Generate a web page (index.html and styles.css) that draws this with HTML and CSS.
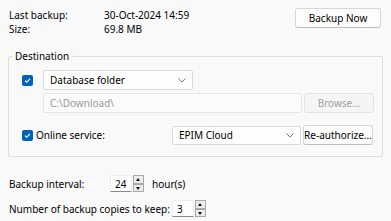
FILE: index.html
```html
<!DOCTYPE html>
<html lang="en">
<head>
  <meta charset="UTF-8">
  <title>Backup</title>
  <link rel="stylesheet" href="styles.css">
</head>
<body>
  <div class="dialog">
    <div class="summary">
      <dl class="info">
        <dt>Last backup:</dt><dd>30-Oct-2024 14:59</dd>
        <dt>Size:</dt><dd>69.8 MB</dd>
      </dl>
      <button class="btn btn-main">Backup Now</button>
    </div>

    <fieldset class="group">
      <legend>Destination</legend>
      <div class="row">
        <span class="check"><svg viewBox="0 0 11 11"><path d="M3 5.6 L4.7 7.2 L8 3.8" /></svg></span>
        <div class="combo combo-folder">
          <span>Database folder</span>
          <svg class="chevron" viewBox="0 0 8 5"><path d="M0.5 0.5 L4 4 L7.5 0.5" /></svg>
        </div>
      </div>
      <div class="row row-path">
        <div class="textbox disabled">C:\Download\</div>
        <button class="btn btn-side disabled">Browse...</button>
      </div>
      <div class="row row-online">
        <label class="check-label">
          <span class="check"><svg viewBox="0 0 11 11"><path d="M3 5.6 L4.7 7.2 L8 3.8" /></svg></span>
          Online service:
        </label>
        <div class="combo combo-service">
          <span>EPIM Cloud</span>
          <svg class="chevron" viewBox="0 0 8 5"><path d="M0.5 0.5 L4 4 L7.5 0.5" /></svg>
        </div>
        <button class="btn btn-side">Re-authorize...</button>
      </div>
    </fieldset>

    <div class="setting">
      <span class="setting-label label-interval">Backup interval:</span>
      <div class="spin">
        <span class="spin-value">24</span>
        <div class="spin-buttons">
          <span class="spin-up"></span>
          <span class="spin-down"></span>
        </div>
      </div>
      <span class="unit">hour(s)</span>
    </div>
    <div class="setting setting-copies">
      <span class="setting-label label-copies">Number of backup copies to keep:</span>
      <div class="spin">
        <span class="spin-value">3</span>
        <div class="spin-buttons">
          <span class="spin-up"></span>
          <span class="spin-down"></span>
        </div>
      </div>
    </div>
  </div>
</body>
</html>
```

FILE: styles.css
```css
body {
  margin: 0;
  background: #f9f9f9;
  font-family: "Noto Sans", "Open Sans", sans-serif;
  font-size: 10px;
  color: #000;
}
.dialog {
  width: 391px;
  height: 221px;
  box-sizing: border-box;
  padding: 8px 8px 0 8px;
}
.summary {
  display: flex;
  justify-content: space-between;
  align-items: flex-start;
  padding-left: 1px;
  padding-right: 2px;
}
.info {
  display: grid;
  grid-template-columns: 95px auto;
  margin: 0;
  line-height: 14px;
}
.info dt, .info dd {
  margin: 0;
}
.btn {
  font: inherit;
  color: #000;
  background: #fdfdfd;
  border: 1px solid #d6d6d6;
  border-bottom-color: #bdbdbd;
  border-radius: 3px;
  padding: 0;
  height: 20px;
}
.btn-main {
  width: 86px;
}
.btn-side {
  width: 70px;
  margin-left: 2px;
}
.btn.disabled {
  color: #a0a0a0;
  background: #f5f5f5;
  border-color: #e3e3e3;
}
.group {
  margin: 13px 0 0 0;
  padding: 7px 8px 11px 13px;
  border: 1px solid #dedede;
  border-radius: 2px;
}
.group legend {
  margin-left: -9px;
  padding: 0 2px;
  line-height: 14px;
}
.row {
  display: flex;
  align-items: center;
  height: 20px;
}
.row-path {
  margin-top: 3px;
  padding-left: 21px;
}
.row-online {
  margin-top: 12px;
}
.check {
  display: inline-block;
  width: 11px;
  height: 11px;
  border-radius: 2px;
  background: #0063b8;
  margin-right: 10px;
}
.check svg {
  display: block;
  width: 11px;
  height: 11px;
  fill: none;
  stroke: #fff;
  stroke-width: 1.1;
}
.check-label {
  display: flex;
  align-items: center;
  width: 150px;
}
.check-label .check {
  margin-right: 3px;
}
.combo {
  display: flex;
  align-items: center;
  justify-content: space-between;
  box-sizing: border-box;
  height: 20px;
  padding: 0 6px 0 6px;
  background: #fefefe;
  border: 1px solid #dadada;
  border-radius: 2px;
  color: #000;
}
.combo-folder {
  width: 150px;
}
.combo-service {
  width: 129px;
  height: 19px;
}
.chevron {
  width: 8px;
  height: 5px;
  fill: none;
  stroke: #777;
  stroke-width: 1;
}
.textbox {
  box-sizing: border-box;
  width: 259px;
  height: 20px;
  line-height: 18px;
  padding-left: 6px;
  background: #fbfbfb;
  border: 1px solid #e6e6e6;
  border-radius: 2px;
}
.textbox.disabled {
  color: #9a9a9a;
}
.setting {
  display: flex;
  align-items: center;
  margin-top: 18px;
  padding-left: 1px;
  height: 17px;
}
.setting-copies {
  margin-top: 8px;
}
.label-interval {
  width: 101px;
}
.label-copies {
  width: 163px;
}
.spin {
  display: flex;
  height: 17px;
}
.spin-value {
  box-sizing: border-box;
  width: 22px;
  height: 17px;
  line-height: 16px;
  padding-left: 4px;
  background: #fff;
  border: 1px solid #ececec;
  border-bottom-color: #8a8a8a;
  border-radius: 2px 2px 0 0;
}
.spin-buttons {
  display: flex;
  flex-direction: column;
  margin-left: 1px;
  width: 11px;
}
.spin-buttons span {
  position: relative;
  flex: 1;
  box-sizing: border-box;
  background: #ececec;
  border: 1px solid #a9a9a9;
}
.spin-buttons span::after {
  content: "";
  position: absolute;
  left: 2px;
  border-left: 2.5px solid transparent;
  border-right: 2.5px solid transparent;
}
.spin-up::after {
  top: 2px;
  border-bottom: 3px solid #111;
}
.spin-down::after {
  top: 2px;
  border-top: 3px solid #111;
}
.unit {
  margin-left: 8px;
}
```
